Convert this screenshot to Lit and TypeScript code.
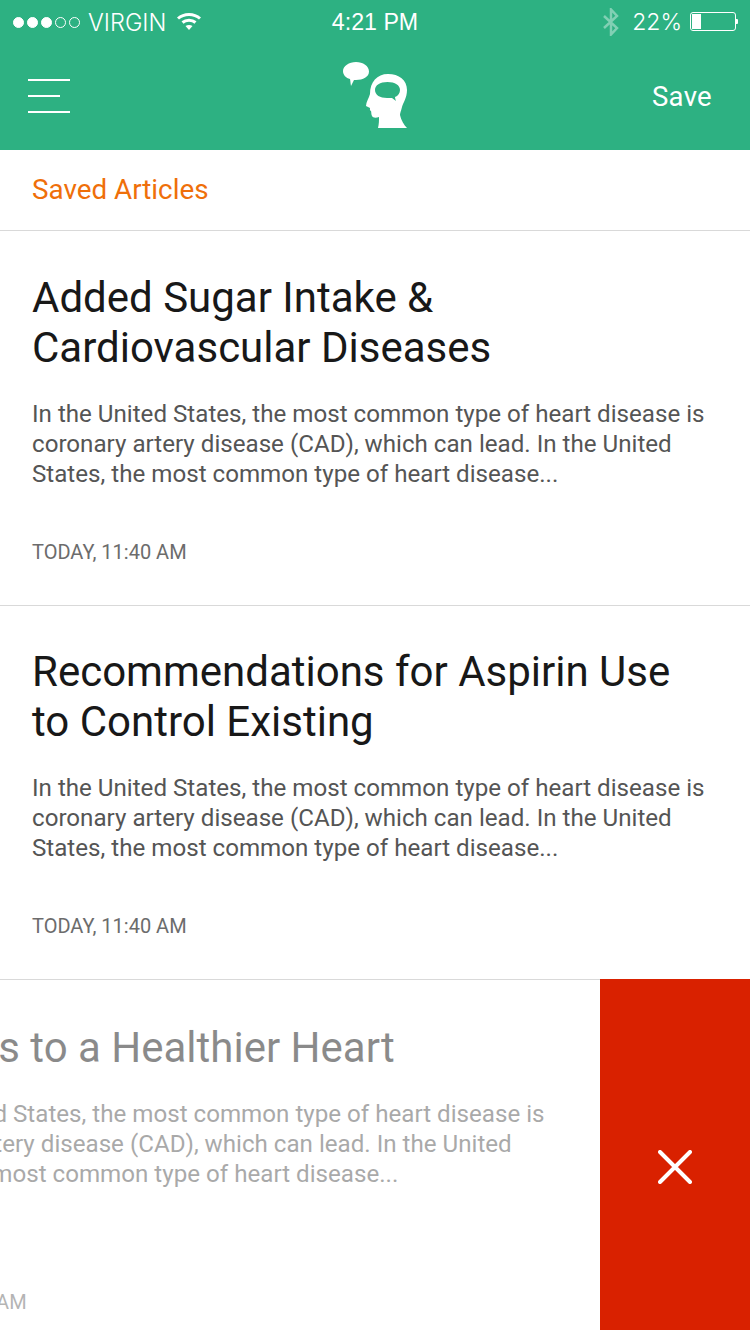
import { LitElement, html, css } from "lit";
import { customElement } from "lit/decorators.js";

const BODY = "In the United States, the most common type of heart disease is coronary artery disease (CAD), which can lead. In the United States, the most common type of heart disease...";

@customElement("app-root")
export class AppRoot extends LitElement {
  static styles = css`
    :host { display: block; width: 750px; height: 1330px; overflow: hidden; background: #fff; font-family: Roboto, sans-serif; }
    .top { background: #2db182; height: 150px; color: #fff; display: flex; flex-direction: column; }
    .status { height: 44px; display: grid; grid-template-columns: 1fr auto 1fr; align-items: center; font-family: "Liberation Sans", sans-serif; font-size: 23.2px; font-weight: 400; }
    .s-left { display: flex; align-items: center; padding-left: 13px; }
    .thin { font-family: Inter, sans-serif; font-weight: 300; font-size: 23.5px; }
    .pct.thin { font-size: 23px; }
    .dots { display: flex; gap: 3px; margin-right: 8px; }
    .dot { width: 11px; height: 11px; border-radius: 50%; border: 1px solid #fff; box-sizing: border-box; }
    .dot.on { background: #fff; }
    .wifi { margin-left: 11px; margin-top: -2px; }
    .s-right { display: flex; align-items: center; justify-content: flex-end; padding-right: 12px; }
    .pct { margin: 0 8px 0 13px; }
    .nav { flex: 1; position: relative; display: flex; align-items: center; justify-content: space-between; padding: 0 38px 0 28px; margin-top: -2px; }
    .burger { width: 42px; display: flex; flex-direction: column; gap: 14px; }
    .burger i { display: block; height: 2px; background: #fff; }
    .burger i.short { width: 32px; }
    .logo { position: absolute; left: 342px; top: 18px; }
    .save { font-size: 27.5px; letter-spacing: .3px; }
    .head { height: 81px; box-sizing: border-box; padding: 0 0 2px 32px; display: flex; align-items: center; font-size: 27.8px; color: #ef6f0a; border-bottom: 1px solid #d9d9d9; }
    article { box-sizing: border-box; height: 374px; padding: 41px 32px 0 32px; border-bottom: 1px solid #d9d9d9; }
    article.first { height: 375px; padding-top: 42px; }
    h2 { margin: 0 0 26px; font-size: 42px; line-height: 50px; font-weight: 400; color: #181818; }
    p { margin: 0; font-size: 24.15px; line-height: 30px; color: #555; }
    .date { margin-top: 50px; font-size: 20px; line-height: 26px; color: #6c6c6c; }
    .swiped { position: relative; height: 376px; margin-top: -1px; overflow: hidden; }
    .swiped article { height: auto; width: 750px; border: 0; transform: translateX(-160px); padding-top: 44px; opacity: .5; }
    .swiped .date { margin-top: 100px; }
    .del { position: absolute; right: 0; top: 0; bottom: 0; width: 150px; background: #d92100; display: flex; align-items: center; justify-content: center; }
  `;

  private row(title: unknown, first = false) {
    return html`<article class=${first ? "first" : ""}>
      <h2>${title}</h2>
      <p>${BODY}</p>
      <div class="date">TODAY, 11:40 AM</div>
    </article>`;
  }

  render() {
    return html`
      <div class="top">
        <div class="status">
          <div class="s-left">
            <div class="dots">
              <span class="dot on"></span><span class="dot on"></span><span class="dot on"></span><span class="dot"></span><span class="dot"></span>
            </div>
            <span class="thin">VIRGIN</span>
            <svg class="wifi" width="24" height="18" viewBox="0 0 24 18" fill="none" stroke="#fff" stroke-width="3">
              <path d="M1 6.500C7 1 17 1 23 6.500" />
              <path d="M5.500 10.500C9 7.500 15 7.500 18.500 10.500" />
              <path d="M8.500 14L12 18L15.500 14C13.500 12.500 10.500 12.500 8.500 14Z" fill="#fff" stroke="none" />
            </svg>
          </div>
          <div>4:21 PM</div>
          <div class="s-right">
            <svg width="16" height="28" viewBox="0 0 16 28" fill="none" stroke="#fff" stroke-opacity=".4" stroke-width="2.500">
              <path d="M1 8L14 20L8 26.500V1.500L14 8L1 20" />
            </svg>
            <span class="pct thin">22%</span>
            <svg width="48" height="20" viewBox="0 0 48 20">
              <rect x="0.500" y="0.500" width="45" height="18" rx="2.500" fill="none" stroke="#fff" stroke-width="1" />
              <rect x="2" y="2" width="9" height="15" fill="#fff" />
              <path d="M46 7h1a1 1 0 0 1 1 1v3a1 1 0 0 1 -1 1h-1z" fill="#fff" />
            </svg>
          </div>
        </div>
        <div class="nav">
          <div class="burger"><i></i><i class="short"></i><i></i></div>
          <svg class="logo" width="66" height="70" viewBox="0 0 66 70" fill="#fff">
            <path d="M14 2C21 2 27 6 27 11.500C27 17 21 20 14 20C13 20 12.500 20 12 20C11 22 10 24 9 26C8.500 24 8.500 21 8 19C4 18 1 15 1 11C1 6 7 2 14 2Z" />
            <path fill-rule="evenodd" d="M46 14C57 14 65 20 65 30C65 38 61 43 60 47C59 51 58 53 58 55C59 60 62 65 65 68H36C37 64 37 60 37 57C34 58 31 58 30 56C29 54 29.500 52 29 51C27.500 50.500 28 49 28 48L24 46C24 42 27 38 28 34C28 22 35 14 46 14ZM45.500 22C38 22 33 25 33 30C33 35 38 38 45 38C47 38 49 38 50 38L54 41C53.500 39.500 53 38 53 37C56 36 58 33 58 30C58 25 53 22 45.500 22Z" />
          </svg>
          <span class="save">Save</span>
        </div>
      </div>
      <div class="head">Saved Articles</div>
      ${this.row(html`Added Sugar Intake &amp;<br />Cardiovascular Diseases`, true)}
      ${this.row(html`Recommendations for Aspirin Use<br />to Control Existing`)}
      <div class="swiped">
        ${this.row("Recipes to a Healthier Heart")}
        <div class="del">
          <svg width="34" height="34" viewBox="0 0 34 34" stroke="#fff" stroke-width="4" stroke-linecap="round">
            <path d="M2 2L32 32M32 2L2 32" />
          </svg>
        </div>
      </div>
    `;
  }
}
